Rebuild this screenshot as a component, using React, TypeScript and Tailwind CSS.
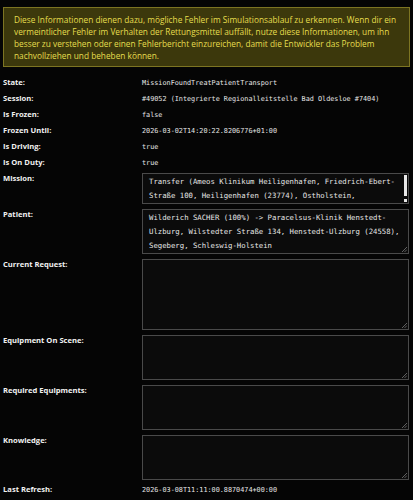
import React from "react";

interface Field {
  label: string;
  value?: string;
  area?: string;
  h?: string;
  scroll?: boolean;
}

const NOTICE = [
  "Diese Informationen dienen dazu, mögliche Fehler im Simulationsablauf zu erkennen. Wenn dir ein",
  "vermeintlicher Fehler im Verhalten der Rettungsmittel auffällt, nutze diese Informationen, um ihn",
  "besser zu verstehen oder einen Fehlerbericht einzureichen, damit die Entwickler das Problem",
  "nachvollziehen und beheben können.",
];

const SIMPLE: Field[] = [
  { label: "State:", value: "MissionFoundTreatPatientTransport" },
  { label: "Session:", value: "#49052 (Integrierte Regionalleitstelle Bad Oldesloe #7404)" },
  { label: "Is Frozen:", value: "false" },
  { label: "Frozen Until:", value: "2026-03-02T14:20:22.8206776+01:00" },
  { label: "Is Driving:", value: "true" },
  { label: "Is On Duty:", value: "true" },
];

const AREAS: Field[] = [
  {
    label: "Mission:",
    area: "Transfer (Ameos Klinikum Heiligenhafen, Friedrich-Ebert-Straße 100, Heiligenhafen (23774), Ostholstein, Schleswig-Holstein)",
    h: "h-[31px]",
    scroll: true,
  },
  {
    label: "Patient:",
    area: "Wilderich SACHER (100%) -> Paracelsus-Klinik Henstedt-Ulzburg, Wilstedter Straße 134, Henstedt-Ulzburg (24558), Segeberg, Schleswig-Holstein",
    h: "h-[45px]",
  },
  { label: "Current Request:", area: "", h: "h-[71px]" },
  { label: "Equipment On Scene:", area: "", h: "h-[45px]" },
  { label: "Required Equipments:", area: "", h: "h-[45px]" },
  { label: "Knowledge:", area: "", h: "h-[45px]" },
];

const mono = "font-['DejaVu_Sans_Mono','Liberation_Mono',monospace]";
const sans = "font-['Open_Sans','Noto_Sans',sans-serif]";

function Grip() {
  return (
    <svg className="absolute bottom-[1px] right-[1px]" width="5" height="5" viewBox="0 0 5 5">
      <path d="M5 0 L0 5 M5 2.5 L2.5 5" stroke="#777" strokeWidth="0.8" />
    </svg>
  );
}

function Area({ f }: { f: Field }) {
  return (
    <div className={`relative flex ${f.h} w-[267px] border border-[#4a4a4a] bg-[#0b0b0b] overflow-hidden`}>
      <div className={`flex-1 overflow-hidden px-[6px] pt-[1px] text-[7.3px] leading-[14px] text-[#e6e6e6] ${mono} break-words`}>
        {f.area}
      </div>
      {f.scroll ? (
        <div className="flex w-[5px] flex-col items-center justify-between py-[1px]">
          <div className="h-[21px] w-[3px] bg-[#e8e8e8]" />
          <div className="h-[3px] w-[3px] bg-[#e8e8e8]" />
        </div>
      ) : (
        <Grip />
      )}
    </div>
  );
}

export default function App() {
  return (
    <div className={`h-[500px] w-full overflow-hidden bg-[#050505] px-[3px] pt-[7px] ${sans}`}>
      <div className="h-[60px] border border-[#7d7522] bg-[#3c380c] px-[10px] pt-[6px] text-[8.3px] leading-[12px] text-[#e6de4e]">
        {NOTICE.map((l) => (
          <div key={l} className="whitespace-nowrap">{l}</div>
        ))}
      </div>

      <div className="mt-[8px] flex flex-col">
        {SIMPLE.map((f) => (
          <div key={f.label} className="grid h-[16px] grid-cols-[139px_1fr] items-center">
            <span className="text-[7.6px] font-bold text-[#f2f2f2]">{f.label}</span>
            <span className={`text-[6.8px] text-[#e6e6e6] whitespace-nowrap ${mono}`}>{f.value}</span>
          </div>
        ))}

        <div className="mt-[2px] flex flex-col gap-[5px]">
          {AREAS.map((f) => (
            <div key={f.label} className="grid grid-cols-[139px_1fr] items-start">
              <span className="text-[7.6px] leading-[11px] font-bold text-[#f2f2f2]">{f.label}</span>
              <Area f={f} />
            </div>
          ))}
        </div>

        <div className="mt-[2px] grid h-[16px] grid-cols-[139px_1fr] items-center">
          <span className="text-[7.6px] font-bold text-[#f2f2f2]">Last Refresh:</span>
          <span className={`text-[6.8px] text-[#e6e6e6] whitespace-nowrap ${mono}`}>2026-03-08T11:11:00.8870474+00:00</span>
        </div>
      </div>
    </div>
  );
}
